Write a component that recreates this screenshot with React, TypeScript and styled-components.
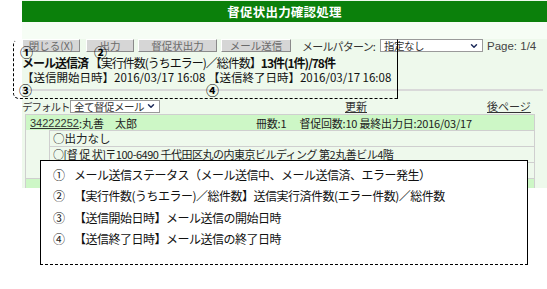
import React from "react";
import styled, { createGlobalStyle } from "styled-components";
import { ChevronDown } from "lucide-react";

const GlobalStyle = createGlobalStyle`
  html, body {
    margin: 0;
    padding: 0;
    background: #fff;
  }
  body {
    font-family: "Noto Sans CJK JP", "Noto Sans", sans-serif;
    color: #000;
  }
`;

const Page = styled.div`
  position: relative;
  width: 547px;
  height: 289px;
  overflow: hidden;
  background: #fff;
`;

const Shot = styled.div`
  margin-left: 22px;
  width: 525px;
  height: 188px;
  display: flex;
  flex-direction: column;
  background-color: #eef9ec;
  background-image: radial-gradient(#d2efcf 0.6px, transparent 0.7px);
  background-size: 2px 2px;
  overflow: hidden;

  & > * {
    flex-shrink: 0;
  }
`;

const Header = styled.div`
  height: 21px;
  margin-top: 1px;
  background: #0b800b;
  color: #fff;
  font-size: 12.5px;
  font-weight: 700;
  display: flex;
  align-items: center;
  justify-content: center;
  letter-spacing: 0.2px;
`;

const Gap = styled.div`
  height: 17px;
  background: #f6fdf5;
`;

const Toolbar = styled.div`
  display: flex;
  align-items: center;
  height: 13px;
`;

const Button = styled.div<{ $w: number; $ml?: number }>`
  width: ${(p) => p.$w}px;
  margin-left: ${(p) => p.$ml ?? 0}px;
  height: 13px;
  box-sizing: border-box;
  background: #d6d6d6;
  border: 1px solid #fff;
  border-right-color: #8a8a8a;
  border-bottom-color: #8a8a8a;
  color: #6a6a6a;
  font-size: 10.5px;
  line-height: 11px;
  text-align: center;
  white-space: nowrap;
`;

const Label = styled.span<{ $w: number; $ml?: number; $ls: number; $size: number }>`
  width: ${(p) => p.$w}px;
  margin-left: ${(p) => p.$ml ?? 0}px;
  font-size: ${(p) => p.$size}px;
  letter-spacing: ${(p) => p.$ls}px;
  color: #333;
  white-space: nowrap;
`;

const Select = styled.div<{ $w: number; $ml?: number }>`
  width: ${(p) => p.$w}px;
  margin-left: ${(p) => p.$ml ?? 0}px;
  height: 13px;
  box-sizing: border-box;
  border: 1px solid #9a9a9a;
  background: #fff;
  display: flex;
  align-items: center;
  justify-content: space-between;
  padding: 0 3px;
  font-size: 10.5px;
  letter-spacing: -0.5px;
  color: #333;
  white-space: nowrap;
`;

const PageNo = styled.span`
  margin-left: 4px;
  font-family: "Liberation Sans", Arial, sans-serif;
  font-size: 11.5px;
  color: #444;
  white-space: nowrap;
`;

const Status = styled.div`
  margin-top: 4px;
  display: flex;
  flex-direction: column;
  white-space: nowrap;
`;

const StatusLine = styled.div<{ $size: number; $ls: number }>`
  font-size: ${(p) => p.$size}px;
  letter-spacing: ${(p) => p.$ls}px;
  line-height: 14px;
  color: #111;
`;

const Strong = styled.b`
  font-weight: 700;
`;

const Rule = styled.div`
  margin-top: 5px;
  height: 2px;
  background: #d9d9d9;
  margin-right: 4px;
`;

const NavRow = styled.div`
  display: flex;
  align-items: center;
  height: 14px;
  margin-top: 8px;
  white-space: nowrap;
`;

const Link = styled.span<{ $ml: number }>`
  margin-left: ${(p) => p.$ml}px;
  font-size: 11px;
  color: #333;
  text-decoration: underline;
`;

const Record = styled.div`
  margin: 1px 12px 0 3px;
  border: 1px solid #cfcfcf;
  display: flex;
  flex-direction: column;
`;

const RecordHead = styled.div`
  height: 15px;
  background: #cdf7c6;
  display: flex;
  align-items: center;
  padding-left: 4px;
  font-size: 11px;
  color: #222;
  white-space: nowrap;
`;

const Id = styled.span`
  font-family: "Liberation Sans", Arial, sans-serif;
  text-decoration: underline;
  font-size: 11px;
  color: #333;
`;

const HeadCell = styled.span<{ $ml: number }>`
  margin-left: ${(p) => p.$ml}px;
  letter-spacing: -0.2px;
`;

const Item = styled.div<{ $small?: boolean }>`
  height: 15px;
  margin-left: 23px;
  border-left: 1px solid #cfcfcf;
  border-top: 1px solid #cfcfcf;
  padding-left: 3px;
  font-size: ${(p) => (p.$small ? 11 : 11.5)}px;
  letter-spacing: ${(p) => (p.$small ? -0.5 : 0)}px;
  line-height: 15px;
  color: #222;
  white-space: nowrap;
`;

const NextRecord = styled.div`
  height: 15px;
  border-top: 1px solid #cfcfcf;
  background: #cdf7c6;
`;

const Bracket = styled.div`
  position: absolute;
  left: 13px;
  top: 39px;
  width: 383px;
  height: 58px;
  border: 1px dashed #000;
  border-right-style: solid;
  border-top-color: transparent;
  border-radius: 6px 0 0 6px;
  pointer-events: none;
`;

const Mark = styled.span<{ $x: number; $y: number }>`
  position: absolute;
  left: ${(p) => p.$x}px;
  top: ${(p) => p.$y}px;
  font-size: 13px;
  font-weight: 700;
  line-height: 13px;
  color: #000;
`;

const Legend = styled.div`
  position: absolute;
  left: 40px;
  top: 160px;
  width: 488px;
  height: 105px;
  box-sizing: border-box;
  background: #fff;
  border: 1px solid #000;
  border-bottom-style: dashed;
  padding: 3px 0 0 12px;
  display: flex;
  flex-direction: column;
`;

const LegendRow = styled.div`
  display: flex;
  height: 21.3px;
  align-items: center;
  font-size: 12px;
  letter-spacing: -0.5px;
  color: #111;
  white-space: nowrap;
`;

const LegendNo = styled.span`
  width: 21px;
  color: #222;
`;

const legend = [
  ["①", "メール送信ステータス（メール送信中、メール送信済、エラー発生）"],
  ["②", "【実行件数(うちエラー)／総件数】送信実行済件数(エラー件数)／総件数"],
  ["③", "【送信開始日時】メール送信の開始日時"],
  ["④", "【送信終了日時】メール送信の終了日時"],
];

export default function App() {
  return (
    <Page>
      <GlobalStyle />
      <Shot>
        <Header>督促状出力確認処理</Header>
        <Gap />
        <Toolbar>
          <Button $w={58}>閉じる(X)</Button>
          <Button $w={48} $ml={6}>出力</Button>
          <Button $w={79} $ml={4}>督促状出力</Button>
          <Button $w={70} $ml={4}>メール送信</Button>
          <Label $w={74} $ml={11} $ls={-0.8} $size={11}>メールパターン:</Label>
          <Select $w={103} $ml={4}>
            指定なし
            <ChevronDown size={10} strokeWidth={3.5} color="#1d2a5a" />
          </Select>
          <PageNo>Page: 1/4</PageNo>
        </Toolbar>
        <Status>
          <StatusLine $size={12} $ls={-1}>
            <Strong>メール送信済</Strong> 【実行件数(うちエラー)／総件数】
            <Strong>13件(1件)/78件</Strong>
          </StatusLine>
          <StatusLine $size={11.5} $ls={0}>
            【送信開始日時】2016/03/17 16:08 【送信終了日時】2016/03/17 16:08
          </StatusLine>
        </Status>
        <Rule />
        <NavRow>
          <Label $w={48} $ls={-1} $size={10.5}>デフォルト:</Label>
          <Select $w={90}>
            全て督促メール
            <ChevronDown size={10} strokeWidth={3.5} color="#1d2a5a" />
          </Select>
          <Link $ml={185}>更新</Link>
          <Link $ml={120}>後ページ</Link>
        </NavRow>
        <Record>
          <RecordHead>
            <Id>34222252</Id>:丸善　太郎
            <HeadCell $ml={119}>冊数:1</HeadCell>
            <HeadCell $ml={13}>督促回数:10 最終出力日:2016/03/17</HeadCell>
          </RecordHead>
          <Item>○出力なし</Item>
          <Item $small>○[督 促 状]〒100-6490 千代田区丸の内東京ビルディング 第2丸善ビル4階</Item>
          <Item />
          <NextRecord />
        </Record>
      </Shot>
      <Bracket />
      <Mark $x={20} $y={45}>①</Mark>
      <Mark $x={94} $y={45}>②</Mark>
      <Mark $x={19} $y={83}>③</Mark>
      <Mark $x={206} $y={83}>④</Mark>
      <Legend>
        {legend.map(([n, t]) => (
          <LegendRow key={n}>
            <LegendNo>{n}</LegendNo>
            {t}
          </LegendRow>
        ))}
      </Legend>
    </Page>
  );
}
